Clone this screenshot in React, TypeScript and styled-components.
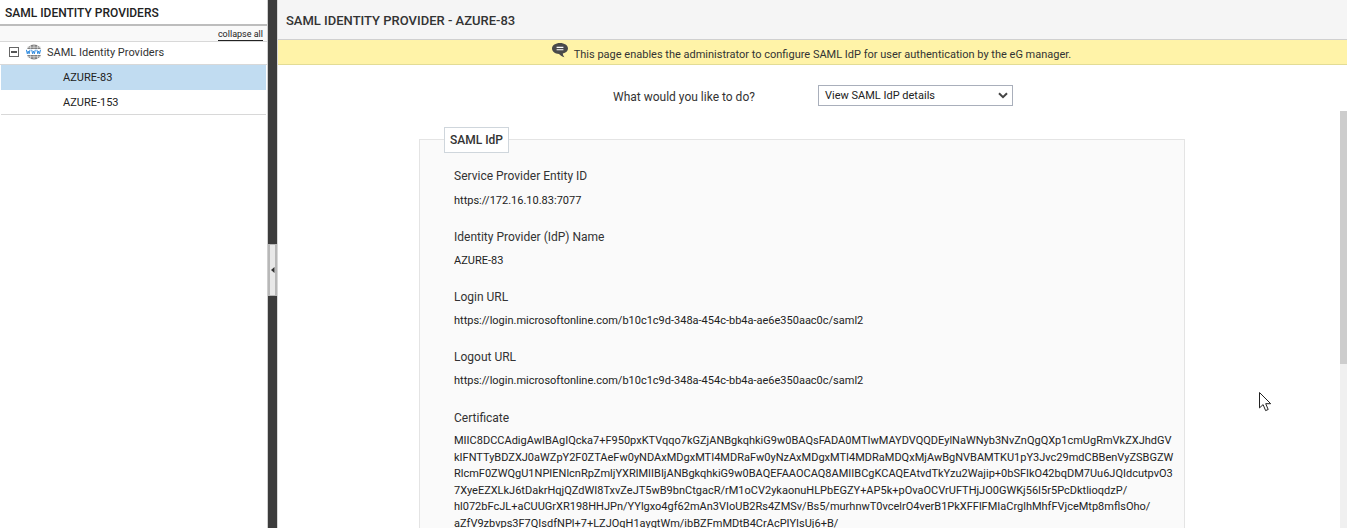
import React from 'react';
import styled, { createGlobalStyle } from 'styled-components';

const GlobalStyle = createGlobalStyle`
  html, body {
    margin: 0;
    padding: 0;
    height: 100%;
    overflow: hidden;
    background: #fff;
    font-family: Roboto, "Liberation Sans", sans-serif;
    color: #222;
  }
`;

const fields = [
  { label: 'Service Provider Entity ID', value: 'https://172.16.10.83:7077' },
  { label: 'Identity Provider (IdP) Name', value: 'AZURE-83' },
  { label: 'Login URL', value: 'https://login.microsoftonline.com/b10c1c9d-348a-454c-bb4a-ae6e350aac0c/saml2' },
  { label: 'Logout URL', value: 'https://login.microsoftonline.com/b10c1c9d-348a-454c-bb4a-ae6e350aac0c/saml2' },
];

const certLines = [
  'MIIC8DCCAdigAwIBAgIQcka7+F950pxKTVqqo7kGZjANBgkqhkiG9w0BAQsFADA0MTIwMAYDVQQDEylNaWNyb3NvZnQgQXp1cmUgRmVkZXJhdGV',
  'kIFNTTyBDZXJ0aWZpY2F0ZTAeFw0yNDAxMDgxMTI4MDRaFw0yNzAxMDgxMTI4MDRaMDQxMjAwBgNVBAMTKU1pY3Jvc29mdCBBenVyZSBGZW',
  'RlcmF0ZWQgU1NPIENlcnRpZmljYXRlMIIBIjANBgkqhkiG9w0BAQEFAAOCAQ8AMIIBCgKCAQEAtvdTkYzu2Wajip+0bSFIkO42bqDM7Uu6JQIdcutpvO3',
  '7XyeEZXLkJ6tDakrHqjQZdWI8TxvZeJT5wB9bnCtgacR/rM1oCV2ykaonuHLPbEGZY+AP5k+pOvaOCVrUFTHjJO0GWKj56I5r5PcDktlioqdzP/',
  'hl072bFcJL+aCUUGrXR198HHJPn/YYlgxo4gf62mAn3VIoUB2Rs4ZMSv/Bs5/murhnwT0vcelrO4verB1PkXFFlFMIaCrglhMhfFVjceMtp8mflsOho/',
  'aZfV9zbvps3F7QIsdfNPl+7+LZJOqH1aygtWm/ibBZFmMDtB4CrAcPIYIsUj6+B/',
];

const GlobeIcon = () => (
  <svg width="16" height="16" viewBox="0 0 16 16" aria-hidden="true">
    <circle cx="8" cy="8" r="7.6" fill="#7f7f7f" />
    <path d="M1 3.2h14M1 12.8h14M8 .4v4M8 11.6v4M4.5 1v3.6M11.5 1v3.6M4.5 11.4V15M11.5 11.4V15" stroke="#dcdcdc" strokeWidth="0.8" fill="none" />
    <rect x="0" y="5" width="16" height="6" fill="#fff" />
    <path d="M.4 5.8l.9 4 .9-2.8.9 2.8.9-4M5.7 5.8l.9 4 .9-2.8.9 2.8.9-4M10.9 5.8l.9 4 .9-2.8.9 2.8.9-4" stroke="#2f8be0" strokeWidth="1" fill="none" />
  </svg>
);

const CommentIcon = () => (
  <svg width="16" height="15" viewBox="0 0 16 15" aria-hidden="true">
    <path d="M8 0C3.6 0 0 2.3 0 5.5 0 8.4 3 10.7 7 11c1.3 1.4 3.4 2.8 5.4 3.2-.9-1-1.5-2.2-1.6-3.6C13.9 9.9 16 7.9 16 5.5 16 2.3 12.4 0 8 0z" fill="#4a4a4a" />
    <path d="M4.6 4.4h6.8M4.6 6.8h6.8" stroke="#fff" strokeWidth="1.1" />
  </svg>
);

const CursorIcon = () => (
  <svg width="13" height="20" viewBox="0 0 13 20" aria-hidden="true">
    <path d="M.5.5v15.4l3.6-3.3 2.5 6 2.6-1.1-2.5-5.8h5z" fill="#fff" stroke="#222" strokeWidth="1" strokeLinejoin="miter" />
  </svg>
);

export default function App() {
  return (
    <>
      <GlobalStyle />
      <Page>
        <Sidebar>
          <SideTitle>SAML IDENTITY PROVIDERS</SideTitle>
          <CollapseBar>
            <CollapseLink>collapse all</CollapseLink>
          </CollapseBar>
          <RootRow>
            <Toggle />
            <GlobeIcon />
            <RootLabel>SAML Identity Providers</RootLabel>
          </RootRow>
          <TreeItem $selected>AZURE-83</TreeItem>
          <TreeItem>AZURE-153</TreeItem>
        </Sidebar>
        <Divider>
          <DividerHandle>
            <svg width="4" height="6" viewBox="0 0 4 6" aria-hidden="true">
              <path d="M3.5 0v6L0 3z" fill="#333" />
            </svg>
          </DividerHandle>
        </Divider>
        <Main>
          <MainTitle>SAML IDENTITY PROVIDER - AZURE-83</MainTitle>
          <Notice>
            <NoticeIcon>
              <CommentIcon />
            </NoticeIcon>
            This page enables the administrator to configure SAML IdP for user authentication by the eG manager.
          </Notice>
          <ActionRow>
            <ActionLabel>What would you like to do?</ActionLabel>
            <FakeSelect>
              View SAML IdP details
              <svg width="10" height="7" viewBox="0 0 10 7" aria-hidden="true">
                <path d="M1 1.2l4 4 4-4" stroke="#444" strokeWidth="2" fill="none" />
              </svg>
            </FakeSelect>
          </ActionRow>
          <Panel>
            <Legend>SAML IdP</Legend>
            {fields.map((f, i) => (
              <Field key={f.label}>
                <FieldLabel>{f.label}</FieldLabel>
                <FieldValue $first={i === 0}>{f.value}</FieldValue>
              </Field>
            ))}
            <CertLabel>Certificate</CertLabel>
            <CertText>
              {certLines.map((line) => (
                <div key={line}>{line}</div>
              ))}
            </CertText>
          </Panel>
          <Scrollbar>
            <ScrollThumb />
          </Scrollbar>
          <Cursor>
            <CursorIcon />
          </Cursor>
        </Main>
      </Page>
    </>
  );
}

const Page = styled.div`
  display: flex;
  width: 1347px;
  height: 528px;
  overflow: hidden;
`;

const Sidebar = styled.aside`
  flex: 0 0 268px;
  box-sizing: border-box;
  border-right: 1px solid #cfcfcf;
  background: #fff;
`;

const SideTitle = styled.div`
  box-sizing: border-box;
  height: 26px;
  padding: 6px 0 0 5px;
  border-bottom: 2px solid #bdbdbd;
  font-size: 12px;
  line-height: 15px;
  font-weight: 500;
  color: #222;
  background: #fff;
`;

const CollapseBar = styled.div`
  box-sizing: border-box;
  display: flex;
  justify-content: flex-end;
  height: 16px;
  padding-right: 4px;
  background: #f9f9f9;
  border-bottom: 1px solid #d8d8d8;
`;

const CollapseLink = styled.a`
  font-size: 9px;
  line-height: 12px;
  height: 12px;
  margin-top: 2px;
  color: #222;
  border-bottom: 1px solid #222;
`;

const RootRow = styled.div`
  box-sizing: border-box;
  display: flex;
  align-items: center;
  height: 23px;
  padding: 0 0 2px 9px;
  border-bottom: 1px solid #d8d8d8;
`;

const Toggle = styled.span`
  box-sizing: border-box;
  position: relative;
  width: 10px;
  height: 10px;
  margin-right: 7px;
  border: 1px solid #666;

  &::after {
    content: '';
    position: absolute;
    left: 1px;
    right: 1px;
    top: 3px;
    height: 2px;
    background: #555;
  }
`;

const RootLabel = styled.span`
  margin-left: 5px;
  font-size: 11px;
  color: #333;
`;

const TreeItem = styled.div<{ $selected?: boolean }>`
  box-sizing: border-box;
  height: 25px;
  margin: 0 1px;
  padding: 1px 0 0 62px;
  font-size: 11px;
  line-height: 24px;
  color: #222;
  background: ${(p) => (p.$selected ? '#c1dcf1' : '#fff')};
  border-bottom: 1px solid ${(p) => (p.$selected ? '#c1dcf1' : '#d8d8d8')};
`;

const Divider = styled.div`
  flex: 0 0 9px;
  box-sizing: border-box;
  display: flex;
  align-items: center;
  background: #3c3c3c;
`;

const DividerHandle = styled.div`
  box-sizing: border-box;
  display: flex;
  align-items: center;
  justify-content: center;
  width: 9px;
  height: 52px;
  margin-top: 12px;
  background: #e8e8e8;
  border: 1px solid #b8b8b8;
  border-width: 1px 2px;
`;

const Main = styled.main`
  position: relative;
  flex: 1;
  min-width: 0;
  border-left: 1px solid #d8d8d8;
`;

const MainTitle = styled.div`
  box-sizing: border-box;
  height: 40px;
  padding: 13px 0 0 8px;
  font-size: 13px;
  line-height: 15px;
  font-weight: 500;
  color: #333;
  background: #f5f5f5;
  border-bottom: 1px solid #d0d0d0;
`;

const Notice = styled.div`
  box-sizing: border-box;
  display: flex;
  justify-content: center;
  height: 25px;
  padding: 8px 2px 0 0;
  font-size: 11px;
  line-height: 14px;
  color: #333;
  background: #fff3a8;
  border-bottom: 1px solid #e3dc95;
`;

const NoticeIcon = styled.span`
  height: 15px;
  margin: -5px 6px 0 0;
`;

const ActionRow = styled.div`
  display: flex;
  align-items: center;
  height: 20px;
  margin-top: 20px;
  padding-left: 335px;
`;

const ActionLabel = styled.span`
  width: 205px;
  padding-top: 3px;
  font-size: 12px;
  color: #333;
`;

const FakeSelect = styled.div`
  box-sizing: border-box;
  display: flex;
  align-items: center;
  justify-content: space-between;
  width: 195px;
  height: 21px;
  padding: 0 4px 0 6px;
  font-size: 11px;
  color: #222;
  border: 1px solid #a9afbb;
  background: #fff;
`;

const Panel = styled.section`
  position: relative;
  box-sizing: border-box;
  width: 766px;
  margin: 34px 0 0 141px;
  padding: 28px 10px 0 34px;
  background: #fafafa;
  border: 1px solid #e4e4e4;
`;

const Legend = styled.div`
  position: absolute;
  left: 24px;
  top: -13px;
  box-sizing: border-box;
  height: 26px;
  padding: 0 5px;
  font-size: 12px;
  font-weight: 500;
  line-height: 24px;
  color: #333;
  background: #fff;
  border: 1px solid #cfd6dc;
`;

const Field = styled.div`
  margin-bottom: 22px;
`;

const FieldLabel = styled.div`
  font-size: 12px;
  line-height: 16px;
  color: #333;
`;

const FieldValue = styled.div<{ $first?: boolean }>`
  margin-top: ${(p) => (p.$first ? '11px' : '10px')};
  font-size: 11px;
  line-height: 12px;
  color: #222;
`;

const CertLabel = styled(FieldLabel)`
  margin-top: 23px;
`;

const CertText = styled.div`
  margin-top: 7px;
  font-size: 11px;
  line-height: 16.5px;
  white-space: nowrap;
  color: #222;
`;

const Scrollbar = styled.div`
  position: absolute;
  top: 111px;
  right: 0;
  bottom: 0;
  width: 7px;
  background: #f0f0f0;
`;

const ScrollThumb = styled.div`
  height: 253px;
  background: #cdcdcd;
`;

const Cursor = styled.div`
  position: absolute;
  left: 981px;
  top: 392px;
`;
